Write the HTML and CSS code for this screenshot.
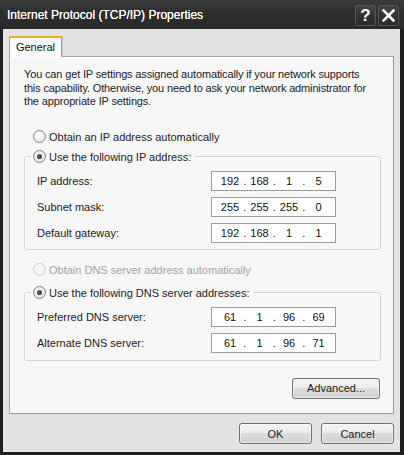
FILE: index.html
```html
<!DOCTYPE html>
<html>
<head>
<meta charset="utf-8">
<link rel="stylesheet" href="styles.css">
</head>
<body>
<div class="window">
  <div class="titlebar">
    <span class="title">Internet Protocol (TCP/IP) Properties</span>
    <div class="tbtns">
      <span class="tbtn help">?</span>
      <span class="tbtn close"><svg width="13" height="13" viewBox="0 0 13 13"><path d="M1.5 1.5 L11.5 11.5 M11.5 1.5 L1.5 11.5" stroke="#fff" stroke-width="2.6" stroke-linecap="square" fill="none"/></svg></span>
    </div>
  </div>
  <div class="client">
    <div class="tabs"><div class="tab">General</div></div>
    <div class="panel">
      <p class="intro">You can get IP settings assigned automatically if your network supports<br>this capability. Otherwise, you need to ask your network administrator for<br>the appropriate IP settings.</p>
      <div class="radio-row first"><span class="radio"></span>Obtain an IP address automatically</div>
      <fieldset class="group">
        <legend><span class="radio on"></span>Use the following IP address:</legend>
        <div class="row"><span class="lbl">IP address:</span><div class="ip"><span>192</span><i>.</i><span>168</span><i>.</i><span>1</span><i>.</i><span>5</span></div></div>
        <div class="row"><span class="lbl">Subnet mask:</span><div class="ip"><span>255</span><i>.</i><span>255</span><i>.</i><span>255</span><i>.</i><span>0</span></div></div>
        <div class="row"><span class="lbl">Default gateway:</span><div class="ip"><span>192</span><i>.</i><span>168</span><i>.</i><span>1</span><i>.</i><span>1</span></div></div>
      </fieldset>
      <div class="radio-row dns disabled"><span class="radio"></span>Obtain DNS server address automatically</div>
      <fieldset class="group dnsgroup">
        <legend><span class="radio on"></span>Use the following DNS server addresses:</legend>
        <div class="row"><span class="lbl">Preferred DNS server:</span><div class="ip"><span>61</span><i>.</i><span>1</span><i>.</i><span>96</span><i>.</i><span>69</span></div></div>
        <div class="row"><span class="lbl">Alternate DNS server:</span><div class="ip"><span>61</span><i>.</i><span>1</span><i>.</i><span>96</span><i>.</i><span>71</span></div></div>
      </fieldset>
      <div class="adv-row"><button class="btn adv">Advanced...</button></div>
    </div>
    <div class="footer">
      <button class="btn ok">OK</button>
      <button class="btn cancel">Cancel</button>
    </div>
  </div>
</div>
</body>
</html>
```
FILE: styles.css
```css
* { box-sizing: border-box; }
html, body { margin: 0; padding: 0; background: #1f1f1f; }
body {
  font-family: "Liberation Sans", Arial, sans-serif;
  font-size: 11px;
  color: #222;
}
.window {
  width: 404px;
  height: 455px;
  background: #1f1f1f;
  padding: 0 4px 3px 3px;
  display: flex;
  flex-direction: column;
}
.titlebar {
  height: 29px;
  flex: none;
  margin: 0 -4px 0 -3px;
  padding: 1px 5px 0 7px;
  display: flex;
  align-items: center;
  justify-content: space-between;
  background: linear-gradient(#3b3b3b, #2f2f2f 40%, #2a2a2a);
}
.title {
  color: #fff;
  font-size: 12px;
  text-shadow: 0 0 0.6px #fff;
}
.tbtns { display: flex; gap: 2px; }
.tbtn {
  width: 21px;
  height: 21px;
  border: 1px solid #555;
  border-radius: 2px;
  background: linear-gradient(#444, #333 50%, #2b2b2b);
  display: flex;
  align-items: center;
  justify-content: center;
  color: #fff;
}
.help {
  font-family: "Liberation Sans", Arial, sans-serif;
  font-weight: bold;
  font-size: 17px;
  line-height: 1;
}
.client {
  flex: 1;
  background: #e2e2e2;
  padding: 7px 6px 0 6px;
  display: flex;
  flex-direction: column;
}
.tabs { height: 20px; display: flex; }
.tab {
  position: relative;
  z-index: 1;
  width: 53px;
  height: 21px;
  border: 1px solid #a0a0a0;
  border-top: 2px solid #f2a72f;
  border-bottom: none;
  background: #fbfbfb;
  text-align: center;
  line-height: 18px;
  color: #111;
  box-shadow: 1px 0 0 #c8c8c8;
}
.panel {
  height: 358px;
  background: #f7f7f7;
  border: 1px solid #a8a8a8;
  border-top-color: #a0a0a0;
  border-right-color: #9a9a9a;
  border-bottom-color: #9a9a9a;
  box-shadow: inset 1px 1px 0 #fff;
  padding: 11px 12px 0 14px;
  display: flex;
  flex-direction: column;
}
.intro {
  margin: 0;
  line-height: 13.5px;
  letter-spacing: -0.15px;
}
.radio-row {
  height: 16px;
  display: flex;
  align-items: center;
  padding-left: 9px;
}
.radio-row.first { margin-top: 20px; }
.radio-row.dns { margin-top: 12px; }
.disabled { color: #a3a3a3; }
.radio {
  width: 13px;
  height: 13px;
  border-radius: 50%;
  border: 1px solid #858585;
  background: radial-gradient(circle at 40% 40%, #fff 0, #f0f0f0 45%, #d8d8d8 100%);
  margin-right: 3px;
  display: flex;
  align-items: center;
  justify-content: center;
  flex: none;
}
.disabled .radio {
  border-color: #cdcdcd;
  background: #f5f5f5;
}
.radio.on::after {
  content: "";
  width: 5px;
  height: 5px;
  border-radius: 50%;
  background: radial-gradient(circle at 40% 35%, #666, #222);
}
.group {
  margin: 4px 0 0 0;
  width: 357px;
  border: 1px solid #d3d3d3;
  border-radius: 3px;
  padding: 6px 0 6px 12px;
  box-shadow: inset 1px 1px 0 #fff;
}
.dnsgroup { margin-top: 7px; padding-bottom: 7px; }
.group legend {
  height: 16px;
  display: flex;
  align-items: center;
  margin-left: -6px;
  padding: 0 3px 0 2px;
}
.row {
  height: 20px;
  display: flex;
  align-items: center;
}
.row + .row { margin-top: 6px; }
.lbl { width: 174px; flex: none; }
.ip {
  width: 125px;
  height: 20px;
  border: 1px solid #9c9c9c;
  background: #fff;
  display: flex;
  align-items: center;
  padding-left: 7px;
  color: #111;
}
.ip span { width: 22px; text-align: center; }
.ip i { width: 7.5px; font-style: normal; text-align: center; }
.adv-row {
  margin-top: 17px;
  display: flex;
  justify-content: flex-end;
  padding-right: 1px;
}
.btn {
  font-family: "Liberation Sans", Arial, sans-serif;
  font-size: 11px;
  color: #222;
  height: 21px;
  border: 1px solid #707070;
  border-radius: 3px;
  background: linear-gradient(#f4f4f4, #ececec 45%, #dcdcdc 50%, #cfcfcf);
  box-shadow: inset 0 0 0 1px rgba(255,255,255,0.6);
  padding: 0;
}
.adv { width: 88px; }
.footer {
  margin-top: 9px;
  display: flex;
  justify-content: flex-end;
  gap: 9px;
}
.ok, .cancel { width: 73px; }
```
